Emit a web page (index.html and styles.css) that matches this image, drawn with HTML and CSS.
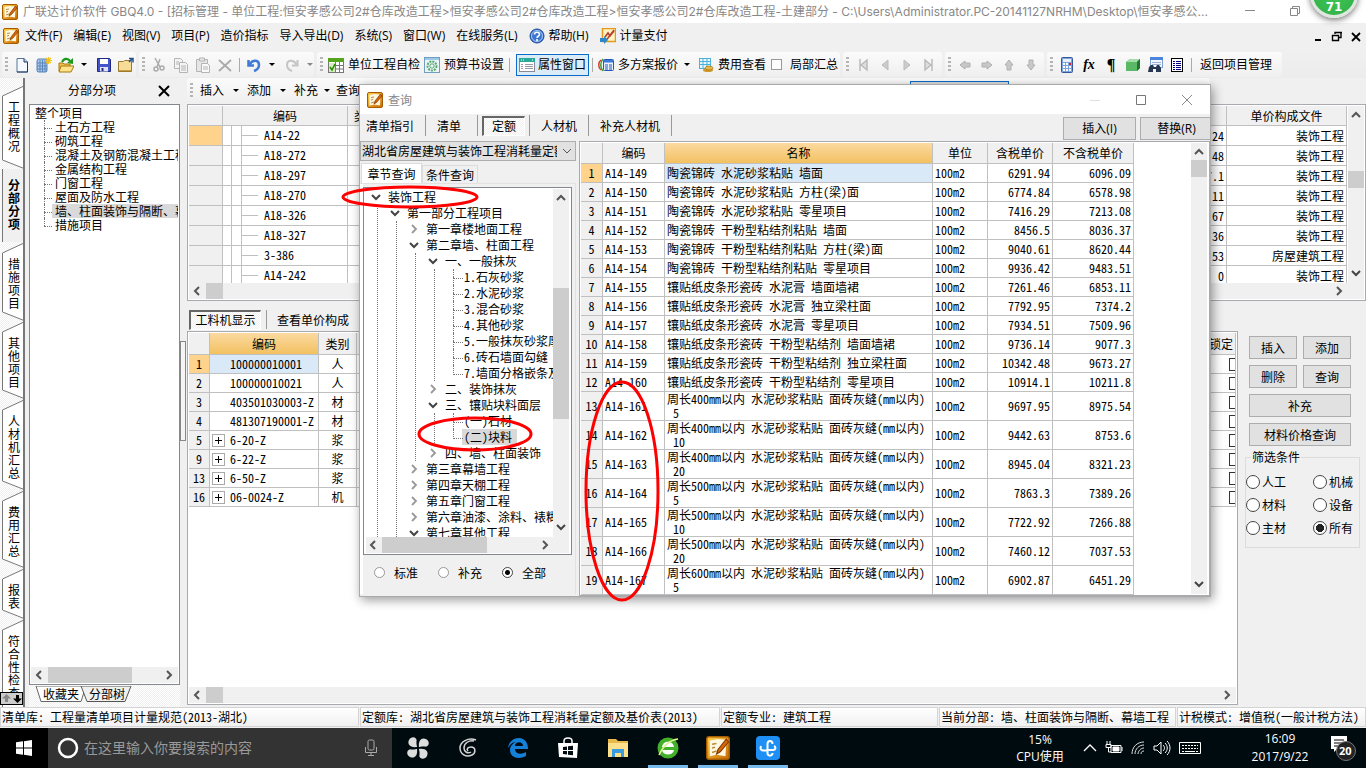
FILE: index.html
```html
<!DOCTYPE html>
<html lang="zh-CN">
<head>
<meta charset="utf-8">
<title>广联达计价软件 GBQ4.0</title>
<link rel="stylesheet" href="styles.css">
</head>
<body>
<svg class="defs" aria-hidden="true">
  <linearGradient id="gold" x1="0" y1="0" x2="1" y2="1"><stop offset="0" stop-color="#ffd24a"/><stop offset="1" stop-color="#c86a00"/></linearGradient>
  <symbol id="i-app" viewBox="0 0 16 16"><rect x=".5" y=".5" width="15" height="15" rx="1.5" fill="url(#gold)" stroke="#a85c00"/><path d="M2.5 3l5-1 6 .5-.5 11-6-1-4.500 1z" fill="#fff8e0"/><path d="M4 5.500l3-.5M4 8l2-.5M4 11l3-1" stroke="#b98a3a"/><path d="M13.500 2L8 9l-1 3 2.500-1.500L15 4z" fill="#d8660a" stroke="#7c3500" stroke-width=".7"/></symbol>
  <symbol id="i-new" viewBox="0 0 16 16"><path d="M3 1.500h7l3.500 3.500v10H3z" fill="#f4f9ff" stroke="#5b7596"/><path d="M10 1.500V5h3.500" fill="#bcd" stroke="#1d3a66"/><path d="M13.500 5v10H3" fill="none" stroke="#1d3a66"/></symbol>
  <symbol id="i-newbld" viewBox="0 0 16 16"><path d="M1 4l1-2h9v12l-1 1H2l-1-1z" fill="#a9c6e8" stroke="#5a83b5"/><path d="M4 3v12M6.500 3v12M9 3v12M1 6h10M1 9h10M1 12h10" stroke="#4f7cb4" stroke-width=".8"/><path d="M12.500 0v7M9 3.500h7M10 1l5 5M15 1l-5 5" stroke="#f2c21a" stroke-width="1.200"/></symbol>
  <symbol id="i-open" viewBox="0 0 16 16"><path d="M1 14V6h4l1 1h6v7z" fill="#f0c14b" stroke="#a8780f"/><path d="M3 9h13l-3 6H1z" fill="#ffe38a" stroke="#a8780f"/><path d="M4 5c2-4 6-4 8-1" fill="none" stroke="#1c9a1c" stroke-width="2.200"/><path d="M9 6l6 1V1z" fill="#1c9a1c"/></symbol>
  <symbol id="i-save" viewBox="0 0 16 16"><path d="M1.500 1.500h12l1 1v12h-13z" fill="#4454c8" stroke="#1e2a85"/><path d="M4 2h8v5H4z" fill="#fff"/><path d="M4 10h8v4.500H4z" fill="#dfe3fa"/><path d="M5.500 11h2v3h-2z" fill="#1e2a85"/></symbol>
  <symbol id="i-fold" viewBox="0 0 16 16"><path d="M.5 4.500h5l1-1h7v11H.5z" fill="#f6dc97" stroke="#9b7a32"/><path d="M1 13h12v1H1z" fill="#c99d3c"/><path d="M11 1.500h4v4M11 5l3-3" fill="none" stroke="#24508e" stroke-width="1.500"/></symbol>
  <symbol id="i-cut" viewBox="0 0 16 16"><g fill="none" stroke="#aaa" stroke-width="1.500"><path d="M4 1l5 9M9 2L6 10"/><circle cx="5" cy="12" r="2"/><circle cx="11" cy="11" r="2"/></g></symbol>
  <symbol id="i-copy" viewBox="0 0 16 16"><g fill="#f4f4f4" stroke="#b4b4b4"><path d="M1.500 1.500h6l2 2v8h-8z"/><path d="M6.500 5.500h6l2 2v8h-8z"/><path d="M8 9h5M8 11h5M8 13h5M3 5h3M3 7h3"/></g></symbol>
  <symbol id="i-paste" viewBox="0 0 16 16"><g fill="#e6e6e6" stroke="#b4b4b4"><path d="M1.500 2.500h11v12h-11z"/><path d="M4.500 1h5v3h-5z"/><path d="M6.500 6.500h6l2 2v7h-8z" fill="#fafafa"/><path d="M8 10h5M8 12h5"/></g></symbol>
  <symbol id="i-x" viewBox="0 0 16 16"><path d="M2 3l12 11M14 3L2 14" stroke="#aaa" stroke-width="1.800"/></symbol>
  <symbol id="i-undo" viewBox="0 0 16 16"><path d="M2.500 3v5.500H8" fill="none" stroke="#3f7ad6" stroke-width="2.500"/><path d="M3.500 7.500C7 2 13 3 13 8c0 3-2 5-5 6" fill="none" stroke="#3f7ad6" stroke-width="2.500"/></symbol>
  <symbol id="i-redo" viewBox="0 0 16 16"><path d="M13.500 3v5.500H8" fill="none" stroke="#c4c4c4" stroke-width="2"/><path d="M12.500 7.500C9 2 3 3 3 8c0 3 2 5 5 6" fill="none" stroke="#c4c4c4" stroke-width="2"/></symbol>
  <symbol id="i-check" viewBox="0 0 16 16"><rect x=".5" y="1.500" width="15" height="14" fill="#fff" stroke="#777"/><path d="M0 1h16v4H0z" fill="#55a51c"/><path d="M1 8.500h14M1 12h14M7.500 5v10M11.500 5v10" stroke="#777"/><path d="M1 6h6v9H1z" fill="#d6ecc2"/><path d="M2 10l2 3 3-6" fill="none" stroke="#2c8a00" stroke-width="1.600"/></symbol>
  <symbol id="i-gear" viewBox="0 0 16 16"><rect x=".5" y=".5" width="15" height="15" fill="#eaf5fb" stroke="#6f9fc0"/><path d="M1 1h14v2H1z" fill="#9cc9e6"/><circle cx="8" cy="9" r="4.500" fill="none" stroke="#5aa76b" stroke-width="2" stroke-dasharray="2 1"/><circle cx="8" cy="9" r="2.200" fill="none" stroke="#5aa76b"/></symbol>
  <symbol id="i-win" viewBox="0 0 16 16"><rect x=".5" y="1.500" width="15" height="13" fill="#fff" stroke="#889"/><path d="M0 1h16v4H0z" fill="#28a99a"/><path d="M2 3h1M4 3h1M13 3h1" stroke="#fff"/><path d="M2 7.500h2M6 7.500h8M2 9.500h2M6 9.500h8M2 11.500h2M6 11.500h8" stroke="#99a"/></symbol>
  <symbol id="i-multi" viewBox="0 0 16 16"><path d="M3 3C0 5 0 11 3 13" fill="none" stroke="#e0332a" stroke-width="1.500"/><path d="M5 2C2 5 2 11 5 14" fill="none" stroke="#2fa33a" stroke-width="1.500"/><rect x="5.500" y="2.500" width="10" height="11" rx="1" fill="#eaf2ff" stroke="#2358b8"/><path d="M6 3h9v2.500H6z" fill="#3d78dd"/><path d="M7 8h3M11 8h3M7 10h3M11 10h3M7 12h3M11 12h3" stroke="#2358b8"/></symbol>
  <symbol id="i-fee" viewBox="0 0 16 16"><rect x="1.500" y="1.500" width="11" height="10" fill="#e9f8ff" stroke="#4db2d8"/><path d="M1 4.500h12M1 7.500h12M5 1v11M9 1v11" stroke="#4db2d8"/><ellipse cx="10" cy="13" rx="5" ry="2" fill="#d09a2a"/><ellipse cx="11" cy="11" rx="4" ry="2" fill="#e8b64a" stroke="#9c6c0c" stroke-width=".6"/></symbol>
  <symbol id="i-first" viewBox="0 0 16 16"><path d="M5 2v12M12 3L6 8l6 5z" fill="#ddd" stroke="#bbb" stroke-width="1.500"/></symbol>
  <symbol id="i-prev" viewBox="0 0 16 16"><path d="M11 3v10L5 8z" fill="#ccc" stroke="#bbb"/></symbol>
  <symbol id="i-next" viewBox="0 0 16 16"><path d="M5 3v10l6-5z" fill="#ccc" stroke="#bbb"/></symbol>
  <symbol id="i-last" viewBox="0 0 16 16"><path d="M11 2v12M4 3l6 5-6 5z" fill="#ddd" stroke="#bbb" stroke-width="1.500"/></symbol>
  <symbol id="i-al" viewBox="0 0 16 16"><path d="M3 8l5-4v2h5v4H8v2z" fill="#c8c8c8" stroke="#b0b0b0"/></symbol>
  <symbol id="i-calc" viewBox="0 0 16 16"><rect x="2.500" y=".5" width="11" height="15" rx="1" fill="#7ea4df" stroke="#35589c"/><path d="M4 2h8v3H4z" fill="#e8f0fa"/><path d="M4 7h8M4 10h8M4 13h8" stroke="#fff" stroke-width="1.800" stroke-dasharray="2 1"/><path d="M10 7h2" stroke="#d22" stroke-width="1.800"/></symbol>
  <symbol id="i-cube" viewBox="0 0 16 16"><path d="M1 5l4-3h10v9l-3 3H1z" fill="#3c9a4a"/><path d="M1 5l4-3h10l-3 3z" fill="#a5dcaa"/><path d="M1 5h11v9H1z" fill="#5ab866"/><path d="M12 5l3-3v9l-3 3z" fill="#217431"/></symbol>
  <symbol id="i-find" viewBox="0 0 16 16"><rect x="3.500" y=".5" width="12" height="10" fill="#f2f7ff" stroke="#7f9fd0"/><path d="M3 0h13v3H3z" fill="#4a84dc"/><path d="M5 5.500h9M5 7.500h9" stroke="#9bb3d6"/><path d="M2 10l2-2h2l1 2h2l1-2h2l2 3v4H9v-3H6v3H1z" fill="#26364e"/></symbol>
  <symbol id="i-list" viewBox="0 0 16 16"><rect x="2.500" y="1.500" width="11" height="13" fill="#fff" stroke="#000"/><path d="M4 4.500h2M7 4.500h5M4 6.500h2M7 6.500h5M4 8.500h2M7 8.500h5M4 10.500h2M7 10.500h5M4 12.500h2M7 12.500h5" stroke="#000080"/></symbol>
  <symbol id="i-help" viewBox="0 0 16 16"><circle cx="8" cy="8" r="7" fill="#3b76d2" stroke="#1c4a99"/><circle cx="8" cy="8" r="5.500" fill="none" stroke="#a9c9f5"/><path d="M5.500 6.500c0-3 5-3 5 0 0 2-2.500 1.500-2.500 3.500M8 11v2" fill="none" stroke="#fff" stroke-width="1.600"/></symbol>
  <symbol id="i-pay" viewBox="0 0 16 16"><rect x="2.500" y=".5" width="13" height="13" fill="#fff3c4" stroke="#e29a1c" stroke-width="1.500"/><path d="M5 9l3-4 2 3 4-5M14 2L8 10l-2 2" fill="none" stroke="#b8402c" stroke-width="1.600"/><path d="M0 10h4V8l4 4-4 4v-2H0z" fill="#2d87c9"/></symbol>
  <symbol id="c-l" viewBox="0 0 10 10"><path d="M7 1L3 5l4 4" fill="none" stroke="#555" stroke-width="2"/></symbol>
  <symbol id="c-r" viewBox="0 0 10 10"><path d="M3 1l4 4-4 4" fill="none" stroke="#555" stroke-width="2"/></symbol>
  <symbol id="c-u" viewBox="0 0 10 10"><path d="M1 7l4-4 4 4" fill="none" stroke="#555" stroke-width="2"/></symbol>
  <symbol id="c-d" viewBox="0 0 10 10"><path d="M1 3l4 4 4-4" fill="none" stroke="#444" stroke-width="2"/></symbol>
  <symbol id="t-top" viewBox="0 0 22 11"><path d="M0 11L22 1v10z" fill="#fff"/><path d="M.5 11L22 1" fill="none" stroke="#777"/></symbol>
  <symbol id="t-bot" viewBox="0 0 22 9"><path d="M0 0h22v9z" fill="#fff"/><path d="M.5 0L22 8.500" fill="none" stroke="#777"/></symbol>
</svg>

<div class="app">
  <header class="titlebar">
    <svg class="ic"><use href="#i-app"/></svg>
    <h1>广联达计价软件 GBQ4.0 - [招标管理 - 单位工程:恒安孝感公司2#仓库改造工程&gt;恒安孝感公司2#仓库改造工程&gt;恒安孝感公司2#仓库改造工程-土建部分 - C:\Users\Administrator.PC-20141127NRHM\Desktop\恒安孝感公...</h1>
    <div class="winctl">
      <svg width="12" height="12"><path d="M1 5.500h10" stroke="#888"/></svg>
      <svg width="12" height="12"><path d="M1.500 3.500h7v7h-7zM3.500 3V1.500h7v7H9" fill="none" stroke="#888"/></svg>
    </div>
    <span class="score">71</span>
  </header>

  <nav class="menubar">
    <svg class="ic"><use href="#i-app"/></svg>
    <button>文件(F)</button><button>编辑(E)</button><button>视图(V)</button><button>项目(P)</button><button>造价指标</button><button>导入导出(D)</button><button>系统(S)</button><button>窗口(W)</button><button>在线服务(L)</button>
    <button class="wi"><svg class="ic"><use href="#i-help"/></svg>帮助(H)</button>
    <button class="wi"><svg class="ic"><use href="#i-pay"/></svg>计量支付</button>
    <div class="mdi">
      <svg width="12" height="12"><path d="M3 10h6" stroke="#000" stroke-width="2"/></svg>
      <svg width="12" height="12"><path d="M1.500 5.500h6v5h-6zM4 4V2.500h6v5H8M1 5.500h7M4 2.500h7" fill="none" stroke="#000" stroke-width="1.400"/></svg>
      <svg width="12" height="12"><path d="M2 3l8 8M10 3l-8 8" stroke="#000" stroke-width="1.800"/></svg>
    </div>
  </nav>

  <div class="toolbar">
    <div class="grp g1"><i class="grip"></i>
      <button aria-label="新建"><svg class="ic"><use href="#i-new"/></svg></button><button aria-label="新建项目"><svg class="ic"><use href="#i-newbld"/></svg></button><button aria-label="打开"><svg class="ic"><use href="#i-open"/></svg></button><i class="dd"></i><button aria-label="保存"><svg class="ic"><use href="#i-save"/></svg></button><button aria-label="目录"><svg class="ic"><use href="#i-fold"/></svg></button></div>
    <div class="grp g2"><i class="grip"></i>
      <button aria-label="剪切"><svg class="ic"><use href="#i-cut"/></svg></button><button aria-label="复制"><svg class="ic"><use href="#i-copy"/></svg></button><button aria-label="粘贴"><svg class="ic"><use href="#i-paste"/></svg></button><button aria-label="删除"><svg class="ic"><use href="#i-x"/></svg></button><i class="sep"></i><button aria-label="撤销"><svg class="ic"><use href="#i-undo"/></svg></button><i class="dd"></i><button aria-label="恢复"><svg class="ic"><use href="#i-redo"/></svg></button><i class="dd off"></i></div>
    <div class="grp g3"><i class="grip"></i>
      <button class="lb"><svg class="ic"><use href="#i-check"/></svg>单位工程自检</button><button class="lb"><svg class="ic"><use href="#i-gear"/></svg>预算书设置</button><i class="sep"></i><button class="lb on"><svg class="ic"><use href="#i-win"/></svg>属性窗口</button><i class="sep"></i><button class="lb"><svg class="ic"><use href="#i-multi"/></svg>多方案报价</button><i class="dd"></i><button class="lb"><svg class="ic"><use href="#i-fee"/></svg>费用查看</button><label class="part"><input type="checkbox">局部汇总</label></div>
    <div class="grp g4"><i class="grip"></i>
      <button aria-label="首条"><svg class="ic"><use href="#i-first"/></svg></button><button aria-label="上一条"><svg class="ic"><use href="#i-prev"/></svg></button><button aria-label="下一条"><svg class="ic"><use href="#i-next"/></svg></button><button aria-label="末条"><svg class="ic"><use href="#i-last"/></svg></button></div>
    <div class="grp g5"><i class="grip"></i>
      <button aria-label="左移"><svg class="ic"><use href="#i-al"/></svg></button><button aria-label="右移"><svg class="ic r180"><use href="#i-al"/></svg></button><button aria-label="上移"><svg class="ic r90"><use href="#i-al"/></svg></button><button aria-label="下移"><svg class="ic r270"><use href="#i-al"/></svg></button></div>
    <div class="grp g6"><i class="grip"></i>
      <button aria-label="计算器"><svg class="ic"><use href="#i-calc"/></svg></button><button class="fx">fx</button><button class="para">¶</button><button aria-label="图元"><svg class="ic"><use href="#i-cube"/></svg></button><button aria-label="查找"><svg class="ic"><use href="#i-find"/></svg></button><button aria-label="清单"><svg class="ic"><use href="#i-list"/></svg></button><i class="sep"></i><button class="lb back">返回项目管理</button></div>
  </div>

  <main class="work">
    <nav class="vtabs">
      <button class="v1"><svg><use href="#t-top"/></svg><span>工程概况</span><svg class="b"><use href="#t-bot"/></svg></button>
      <button class="v2 cur"><span>分部分项</span></button>
      <button class="v3"><svg><use href="#t-top"/></svg><span>措施项目</span><svg class="b"><use href="#t-bot"/></svg></button>
      <button class="v4"><svg><use href="#t-top"/></svg><span>其他项目</span><svg class="b"><use href="#t-bot"/></svg></button>
      <button class="v5"><svg><use href="#t-top"/></svg><span>人材机汇总</span><svg class="b"><use href="#t-bot"/></svg></button>
      <button class="v6"><svg><use href="#t-top"/></svg><span>费用汇总</span><svg class="b"><use href="#t-bot"/></svg></button>
      <button class="v7"><svg><use href="#t-top"/></svg><span>报表</span><svg class="b"><use href="#t-bot"/></svg></button>
      <button class="v8"><svg><use href="#t-top"/></svg><span>符合性检查</span></button>
      <div class="vscr"><svg width="11" height="11"><path d="M5.500 1L1 5.500h3V9h3V5.500h3z" fill="#888"/></svg><svg width="11" height="11"><path d="M5.500 10L1 5.500h3V2h3v3.500h3z" fill="#000"/></svg></div>
    </nav>

    <aside class="side">
      <div class="side-h"><span>分部分项</span><svg width="14" height="14"><path d="M2 2l10 10M12 2L2 12" stroke="#000" stroke-width="2"/></svg></div>
      <div class="tree1">
        <ul>
          <li class="root">整个项目</li><li>土石方工程</li><li>砌筑工程</li><li>混凝土及钢筋混凝土工程</li><li>金属结构工程</li><li>门窗工程</li><li>屋面及防水工程</li><li class="sel">墙、柱面装饰与隔断、幕墙</li><li class="last">措施项目</li>
        </ul>
        <div class="hs"><svg><use href="#c-l"/></svg><i class="th w84"></i><svg class="end"><use href="#c-r"/></svg></div>
      </div>
      <div class="btabs">
        <svg width="110" height="16"><path d="M7 0l5 15.500h40L57 0z" fill="#fff" stroke="#666"/><path d="M52 0l6 15.500h38L102 0z" fill="#f0f0f0" stroke="#555"/></svg>
        <button>收藏夹</button><button>分部树</button>
      </div>
    </aside>
    <div class="split"><i></i></div>

    <section class="center">
      <div class="bar2"><div class="grp"><i class="grip"></i><button>插入</button><i class="dd"></i><button>添加</button><i class="dd"></i><button>补充</button><i class="dd tight"></i><button>查询</button><i class="field"></i></div></div>
      <div class="box top">
        <div class="clip">
          <table class="grid t1">
            <colgroup><col class="c34"><col class="c125"><col><col class="c119"></colgroup>
            <tr><th></th><th>编码</th><th class="l">类别</th><th>单价构成文件</th></tr>
            <tr><td class="n hot"></td><td class="br"><b></b>A14-22</td><td class="r">24</td><td class="r">装饰工程</td></tr>
            <tr><td class="n"></td><td class="br"><b></b>A18-272</td><td class="r">48</td><td class="r">装饰工程</td></tr>
            <tr><td class="n"></td><td class="br"><b></b>A18-297</td><td class="r">7.1</td><td class="r">装饰工程</td></tr>
            <tr><td class="n"></td><td class="br"><b></b>A18-270</td><td class="r">11</td><td class="r">装饰工程</td></tr>
            <tr><td class="n"></td><td class="br"><b></b>A18-326</td><td class="r">67</td><td class="r">装饰工程</td></tr>
            <tr><td class="n"></td><td class="br"><b></b>A18-327</td><td class="r">36</td><td class="r">装饰工程</td></tr>
            <tr><td class="n"></td><td class="br"><b></b>3-386</td><td class="r">53</td><td class="r">房屋建筑工程</td></tr>
            <tr><td class="n"></td><td class="br"><b></b>A14-242</td><td class="r">0</td><td class="r">装饰工程</td></tr>
          </table>
          <div class="vs"><svg><use href="#c-u"/></svg><i class="th a"></i><svg class="end"><use href="#c-d"/></svg></div>
        </div>
        <div class="hs wide"><svg><use href="#c-l"/></svg><i class="th w17"></i><svg class="end"><use href="#c-r"/></svg></div>
      </div>
      <div class="lower">
        <div class="lowl">
          <div class="tabs2"><button class="press">工料机显示</button><i class="bar"></i><button>查看单价构成</button></div>
          <div class="box bot">
            <table class="grid t2">
              <colgroup><col class="c21"><col class="c109"><col class="c38"><col><col class="c28"></colgroup>
              <tr><th></th><th class="gold">编码</th><th>类别</th><th></th><th class="l lock">锁定</th></tr>
              <tr><td class="n hot">1</td><td class="k hit">100000010001</td><td class="c">人</td><td></td><td><input type="checkbox" aria-label="锁定 1"></td></tr>
              <tr><td class="n">2</td><td class="k">100000010021</td><td class="c">人</td><td></td><td><input type="checkbox" aria-label="锁定 2"></td></tr>
              <tr><td class="n">3</td><td class="k">403501030003-Z</td><td class="c">材</td><td></td><td><input type="checkbox" aria-label="锁定 3"></td></tr>
              <tr><td class="n">4</td><td class="k">481307190001-Z</td><td class="c">材</td><td></td><td><input type="checkbox" aria-label="锁定 4"></td></tr>
              <tr><td class="n">5</td><td class="k"><button class="plus" aria-label="展开"></button>6-20-Z</td><td class="c">浆</td><td></td><td><input type="checkbox" aria-label="锁定 5"></td></tr>
              <tr><td class="n">9</td><td class="k"><button class="plus" aria-label="展开"></button>6-22-Z</td><td class="c">浆</td><td></td><td><input type="checkbox" aria-label="锁定 9"></td></tr>
              <tr><td class="n">13</td><td class="k"><button class="plus" aria-label="展开"></button>6-50-Z</td><td class="c">浆</td><td></td><td><input type="checkbox" aria-label="锁定 13"></td></tr>
              <tr><td class="n">16</td><td class="k"><button class="plus" aria-label="展开"></button>06-0024-Z</td><td class="c">机</td><td></td><td><input type="checkbox" aria-label="锁定 16"></td></tr>
            </table>
            <div class="hs"><svg><use href="#c-l"/></svg><i class="th w17"></i><svg class="end"><use href="#c-r"/></svg></div>
          </div>
        </div>
        <aside class="acts">
          <div class="pair"><button class="btn">插入</button><button class="btn">添加</button><button class="btn">删除</button><button class="btn">查询</button><button class="btn full">补充</button><button class="btn full">材料价格查询</button></div>
          <fieldset><legend>筛选条件</legend>
            <label><input type="radio" name="f">人工</label><label><input type="radio" name="f">机械</label>
            <label><input type="radio" name="f">材料</label><label><input type="radio" name="f">设备</label>
            <label><input type="radio" name="f">主材</label><label><input type="radio" name="f" checked>所有</label>
          </fieldset>
        </aside>
      </div>
    </section>
  </main>

  <footer class="status"><span>清单库: 工程量清单项目计量规范(2013-湖北)</span><span>定额库: 湖北省房屋建筑与装饰工程消耗量定额及基价表(2013)</span><span>定额专业: 建筑工程</span><span>当前分部: 墙、柱面装饰与隔断、幕墙工程</span><span>计税模式: 增值税(一般计税方法)</span></footer>

  <div class="taskbar">
    <button class="start" aria-label="开始"><svg width="16" height="16"><path d="M0 2.300L7 1.300V7.500H0zM8 1.200L16 0v7.500H8zM0 8.500h7v6.200L0 13.700zM8 8.500h8V16L8 14.800z" fill="#fff"/></svg></button>
    <div class="search"><svg width="22" height="22"><circle cx="11" cy="11" r="9" fill="none" stroke="#fff" stroke-width="2.500"/></svg><input type="text" placeholder="在这里输入你要搜索的内容" aria-label="搜索"><svg width="14" height="18"><rect x="4" y="1" width="6" height="10" rx="1.500" fill="none" stroke="#aaa"/><path d="M1.500 8v5.500h11V8M7 14v3M4 16.500h6" fill="none" stroke="#aaa"/></svg></div>
    <div class="apps">
      <button aria-label="风扇"><svg width="24" height="24" fill="#ddd"><path d="M11 11C4 12 1 8 3 4s8-4 8 2zM13 11c-1-7 3-10 7-8s4 8-2 8zM13 13c7-1 10 3 8 7s-8 4-8-2zM11 13c1 7-3 10-7 8s-4-8 2-8z"/><path d="M3 12c3 2 6 1 9 0 3-1 6-2 9 0M12 3c-2 3-1 6 0 9 1 3 2 6 0 9" fill="none" stroke="#000b10"/></svg></button>
      <button aria-label="浏览"><svg width="24" height="24" fill="none" stroke="#d4d4d4" stroke-width="1.500"><path d="M20 4C12 1 4 6 4 12s6 10 12 7c4-2 4-8-1-8-3 0-5 2-3 4"/><path d="M18 5c-5-1-10 2-10 7 0 4 4 6 7 4"/></svg></button>
      <button aria-label="Edge"><svg width="24" height="24"><path d="M2 12C3 5 8 2 13 2c6 0 9 5 9 11H9c0 5 6 6 11 3v4c-7 4-16 2-16-6 0-4 3-7 6-8-4 0-6 3-8 6zm7-2h8c0-5-8-5-8 0z" fill="#1580d8"/></svg></button>
      <button aria-label="应用商店"><svg width="24" height="24"><path d="M2 7h20l-1 15-18-1z" fill="#fff"/><path d="M8 9V5c0-4 8-4 8 0v4" fill="none" stroke="#fff" stroke-width="1.500"/><path d="M7 11l4-.5V14H7zM12 10.300l5-.6V14h-5zM7 15h4v3.500L7 18zM12 15h5v4.300l-5-.6z" fill="#000b10"/></svg></button>
      <button aria-label="文件管理器"><svg width="24" height="24"><path d="M2 3h8l2 2h10v16H2z" fill="#e9b94a"/><path d="M2 7h20v14H2z" fill="#ffe08a"/><path d="M6 21v-8h12v8h-3v-4H9v4z" fill="#3a9be0"/></svg></button>
      <button class="run" aria-label="浏览器"><svg width="24" height="24"><circle cx="12" cy="12" r="10.500" fill="#43b02a"/><path d="M6 11c1-7 11-7 12 0zM6 14h12c-1 6-11 6-12 0z" fill="#fff"/><path d="M3 19C8 8 14 4 22 3" fill="none" stroke="#d9f58c" stroke-width="1.500"/></svg></button>
      <button class="run" aria-label="GBQ"><svg width="24" height="24"><use href="#i-app"/></svg></button>
      <button class="run" aria-label="云"><svg width="24" height="24"><rect width="24" height="24" rx="4" fill="#1e90f5"/><path d="M11.500 14V8c0-4 5-4 5 0M5 10c-2 5 3 5 6.500 4H17c3 0 3-3 1-4M11.500 14v3c0 4 5 3 5 0" fill="none" stroke="#fff" stroke-width="2"/></svg></button>
    </div>
    <div class="cpu">15%<br>CPU使用</div>
    <div class="tray">
      <svg width="16" height="16"><path d="M2 11l6-6 6 6" fill="none" stroke="#fff" stroke-width="1.300"/></svg>
      <svg width="18" height="16" fill="none" stroke="#fff"><path d="M6 5.500h10v7H6zM17 7v4M2 1v3M5 1v3M1 4.500h5v3H1zM3.500 8v4H6"/><path d="M8 7h6v4H8z" fill="#fff"/></svg>
      <svg width="16" height="16" fill="none" stroke="#ddd"><path d="M2 14C2 7 7 2 14 2M5 14c0-5 4-9 9-9M8 14c0-3 3-6 6-6M11 14c0-2 1-3 3-3"/></svg>
      <svg width="18" height="16" fill="none" stroke="#fff"><path d="M1 6h3l4-4v12l-4-4H1zM10 5c2 2 2 4 0 6M12 3c3 3 3 7 0 10M14 1c4 4 4 10 0 14"/></svg>
      <svg width="24" height="16" fill="none" stroke="#fff"><path d="M1.500 2.500h21v11h-21z"/><path d="M4 5.500h16M4 8.500h16" stroke-dasharray="2 1"/><path d="M4 11.500h2M7 11.500h10M18 11.500h2"/></svg>
    </div>
    <div class="clock">16:09<br>2017/9/22</div>
    <div class="note"><svg width="28" height="26"><path d="M1 1h16v13H7l-3 3v-3H1z" fill="#fff"/><path d="M4 5h10M4 8h10M4 11h6" stroke="#000"/><circle cx="16" cy="16" r="9.500" fill="#222" stroke="#777"/></svg><span>20</span></div>
  </div>
</div>

<section class="dialog" role="dialog" aria-label="查询">
  <header><svg class="ic"><use href="#i-app"/></svg><h2>查询</h2>
    <svg width="12" height="12"><path d="M1 6.500h10" stroke="#e0e0e0"/></svg><svg width="12" height="12"><path d="M1.500 1.500h9v9h-9z" fill="none" stroke="#777"/></svg><svg width="12" height="12"><path d="M1 1l10 10M11 1L1 11" stroke="#888"/></svg></header>
  <div class="dtabs"><button>清单指引</button><button class="w">清单</button><button class="p"><span class="press">定额</span></button><button>人材机</button><button>补充人材机</button>
    <div class="dact"><button class="btn">插入<u>(I)</u></button><button class="btn">替换<u>(R)</u></button></div></div>
  <div class="dbody">
    <div class="dleft">
      <select aria-label="定额库"><option>湖北省房屋建筑与装饰工程消耗量定额</option></select>
      <div class="qt"><button class="cur">章节查询</button><button>条件查询</button></div>
      <div class="page">
        <div class="tbox">
          <div class="tv">
            <div class="tree2">
              <ul>
                <li><p class="o">装饰工程</p><ul>
                  <li><p class="o">第一部分工程项目</p><ul>
                    <li><p class="s">第一章楼地面工程</p></li>
                    <li><p class="o">第二章墙、柱面工程</p><ul>
                      <li><p class="o">一、一般抹灰</p><ul>
                        <li class="leaf">1.石灰砂浆</li><li class="leaf">2.水泥砂浆</li><li class="leaf">3.混合砂浆</li><li class="leaf">4.其他砂浆</li><li class="leaf">5.一般抹灰砂浆厚度</li><li class="leaf">6.砖石墙面勾缝</li><li class="leaf end">7.墙面分格嵌条及</li></ul></li>
                      <li><p class="s">二、装饰抹灰</p></li>
                      <li><p class="o">三、镶贴块料面层</p><ul>
                        <li class="leaf">(一)石材</li><li class="leaf end"><span class="pick">(二)块料</span></li></ul></li>
                      <li><p class="s">四、墙、柱面装饰</p></li></ul></li>
                    <li><p class="s">第三章幕墙工程</p></li>
                    <li><p class="s">第四章天棚工程</p></li>
                    <li><p class="s">第五章门窗工程</p></li>
                    <li><p class="s">第六章油漆、涂料、裱糊</p></li>
                    <li><p class="o">第七章其他工程</p></li></ul></li></ul></li>
              </ul>
            </div>
            <div class="vs"><svg><use href="#c-u"/></svg><i class="th b"></i><svg class="end"><use href="#c-d"/></svg></div>
          </div>
          <div class="hs"><svg><use href="#c-l"/></svg><i class="th w105"></i><svg class="end"><use href="#c-r"/></svg></div>
        </div>
        <div class="radios"><label><input type="radio" name="k">标准</label><label><input type="radio" name="k">补充</label><label><input type="radio" name="k" checked>全部</label></div>
      </div>
    </div>
    <div class="dright">
      <table class="grid t3">
        <colgroup><col class="c22"><col class="c62"><col class="c268"><col class="c55"><col class="c65"><col class="c81"></colgroup>
        <tr><th></th><th>编码</th><th class="gold">名称</th><th>单位</th><th>含税单价</th><th>不含税单价</th></tr>
        <tr><td class="n hot">1</td><td>A14-149</td><td class="hit">陶瓷锦砖 水泥砂浆粘贴 墙面</td><td>100m2</td><td class="r">6291.94</td><td class="r">6096.09</td></tr>
        <tr><td class="n">2</td><td>A14-150</td><td>陶瓷锦砖 水泥砂浆粘贴 方柱(梁)面</td><td>100m2</td><td class="r">6774.84</td><td class="r">6578.98</td></tr>
        <tr><td class="n">3</td><td>A14-151</td><td>陶瓷锦砖 水泥砂浆粘贴 零星项目</td><td>100m2</td><td class="r">7416.29</td><td class="r">7213.08</td></tr>
        <tr><td class="n">4</td><td>A14-152</td><td>陶瓷锦砖 干粉型粘结剂粘贴 墙面</td><td>100m2</td><td class="r">8456.5</td><td class="r">8036.37</td></tr>
        <tr><td class="n">5</td><td>A14-153</td><td>陶瓷锦砖 干粉型粘结剂粘贴 方柱(梁)面</td><td>100m2</td><td class="r">9040.61</td><td class="r">8620.44</td></tr>
        <tr><td class="n">6</td><td>A14-154</td><td>陶瓷锦砖 干粉型粘结剂粘贴 零星项目</td><td>100m2</td><td class="r">9936.42</td><td class="r">9483.51</td></tr>
        <tr><td class="n">7</td><td>A14-155</td><td>镶贴纸皮条形瓷砖 水泥膏 墙面墙裙</td><td>100m2</td><td class="r">7261.46</td><td class="r">6853.11</td></tr>
        <tr><td class="n">8</td><td>A14-156</td><td>镶贴纸皮条形瓷砖 水泥膏 独立梁柱面</td><td>100m2</td><td class="r">7792.95</td><td class="r">7374.2</td></tr>
        <tr><td class="n">9</td><td>A14-157</td><td>镶贴纸皮条形瓷砖 水泥膏 零星项目</td><td>100m2</td><td class="r">7934.51</td><td class="r">7509.96</td></tr>
        <tr><td class="n">10</td><td>A14-158</td><td>镶贴纸皮条形瓷砖 干粉型粘结剂 墙面墙裙</td><td>100m2</td><td class="r">9736.14</td><td class="r">9077.3</td></tr>
        <tr><td class="n">11</td><td>A14-159</td><td>镶贴纸皮条形瓷砖 干粉型粘结剂 独立梁柱面</td><td>100m2</td><td class="r">10342.48</td><td class="r">9673.27</td></tr>
        <tr><td class="n">12</td><td>A14-160</td><td>镶贴纸皮条形瓷砖 干粉型粘结剂 零星项目</td><td>100m2</td><td class="r">10914.1</td><td class="r">10211.8</td></tr>
        <tr class="two"><td class="n">13</td><td>A14-161</td><td>周长400mm以内 水泥砂浆粘贴 面砖灰缝(mm以内)<br>&nbsp;5</td><td>100m2</td><td class="r">9697.95</td><td class="r">8975.54</td></tr>
        <tr class="two"><td class="n">14</td><td>A14-162</td><td>周长400mm以内 水泥砂浆粘贴 面砖灰缝(mm以内)<br>&nbsp;10</td><td>100m2</td><td class="r">9442.63</td><td class="r">8753.6</td></tr>
        <tr class="two"><td class="n">15</td><td>A14-163</td><td>周长400mm以内 水泥砂浆粘贴 面砖灰缝(mm以内)<br>&nbsp;20</td><td>100m2</td><td class="r">8945.04</td><td class="r">8321.23</td></tr>
        <tr class="two"><td class="n">16</td><td>A14-164</td><td>周长500mm以内 水泥砂浆粘贴 面砖灰缝(mm以内)<br>&nbsp;5</td><td>100m2</td><td class="r">7863.3</td><td class="r">7389.26</td></tr>
        <tr class="two"><td class="n">17</td><td>A14-165</td><td>周长500mm以内 水泥砂浆粘贴 面砖灰缝(mm以内)<br>&nbsp;10</td><td>100m2</td><td class="r">7722.92</td><td class="r">7266.88</td></tr>
        <tr class="two"><td class="n">18</td><td>A14-166</td><td>周长500mm以内 水泥砂浆粘贴 面砖灰缝(mm以内)<br>&nbsp;20</td><td>100m2</td><td class="r">7460.12</td><td class="r">7037.53</td></tr>
        <tr class="two"><td class="n">19</td><td>A14-167</td><td>周长600mm以内 水泥砂浆粘贴 面砖灰缝(mm以内)<br>&nbsp;5</td><td>100m2</td><td class="r">6902.87</td><td class="r">6451.29</td></tr>
      </table>
      <div class="vs"><svg><use href="#c-u"/></svg><i class="th c"></i><svg class="end"><use href="#c-d"/></svg></div>
    </div>
  </div>
</section>

<svg class="marks" width="700" height="610" fill="none" stroke="#f00" stroke-width="3" aria-hidden="true"><ellipse cx="410" cy="197" rx="67" ry="10"/><ellipse cx="475" cy="434" rx="56" ry="16"/><ellipse cx="622" cy="491" rx="36" ry="109"/></svg>
</body>
</html>
```
FILE: styles.css
```css
* { box-sizing: border-box; }
body {
  margin: 0;
  height: 100vh;
  overflow: hidden;
  position: relative;
  font: 12px/14px "Noto Sans Mono CJK SC", "Noto Sans CJK SC", sans-serif;
  color: #000;
  background: #f0f0f0;
}
button, input, select { font: inherit; color: inherit; }
button { border: 0; background: none; padding: 0; margin: 0; white-space: nowrap; }
input { margin: 0; }
ul { list-style: none; margin: 0; padding: 0; }
p, h1, h2 { margin: 0; font: inherit; }
svg { display: block; flex: none; }
.defs { position: absolute; width: 0; height: 0; }
.ic { width: 16px; height: 16px; }
.app { display: flex; flex-direction: column; height: 100vh; }
.menubar, .toolbar, .bar2, .taskbar, .side-h { font-family: "Open Sans", "Noto Sans CJK SC", sans-serif; }

/* title and menu */
.titlebar { display: flex; align-items: center; height: 23px; padding-left: 2px; background: #fff; color: #888; position: relative; font-family: Inter, "Noto Sans CJK SC", sans-serif; }
.titlebar h1 { margin-left: 5px; flex: 1; white-space: nowrap; }
.winctl { display: flex; gap: 33px; padding: 0 65px 2px 16px; }
.score {
  position: absolute; right: 8px; top: -30px; width: 48px; height: 48px; border-radius: 50%;
  border: 3px solid #dfe6df; background: radial-gradient(#3fc655, #2fae46); box-shadow: 0 2px 6px #777;
  color: #fff; font: bold 12px/68px "DejaVu Sans", sans-serif; text-align: center; z-index: 2;
}
.menubar { display: flex; align-items: center; height: 28px; padding: 0 4px 2px 3px; gap: 11px; }
.menubar > .ic { margin-right: -5px; }
.menubar .wi { display: flex; align-items: center; gap: 4px; }
.mdi { display: flex; gap: 7px; margin-left: auto; }

/* toolbars */
.toolbar { display: flex; align-items: center; gap: 3px; height: 27px; padding-left: 2px; background: linear-gradient(#f0f0f0, #ececec); }
.grp { display: flex; align-items: center; height: 25px; border-radius: 3px; background: linear-gradient(#fbfbfb, #efefef); }
.grp button { display: flex; align-items: center; justify-content: center; width: 22px; height: 22px; flex: none; }
.grp .lb { width: auto; padding: 0 2px; gap: 4px; }
.grp .on { border: 1px solid #0a6cc8; background: #dcebf8; gap: 3px; margin-left: 3px; }
.grp .back { padding: 0 5px; }
.g1 { width: 134px; } .g2 { width: 175px; } .g3 { width: 523px; } .g4 { width: 99px; } .g5 { width: 99px; } .g6 { width: 235px; }
.grip { width: 3px; height: 15px; margin: 0 3px; background: repeating-linear-gradient(#b5b5b5 0 2px, transparent 2px 4px); flex: none; }
.dd { width: 0; height: 0; border: 3px solid transparent; border-top-color: #000; border-bottom: 0; margin: 0 6px 0 4px; flex: none; }
.dd.off { border-top-color: #888; }
.sep { width: 1px; height: 14px; background: #aaa; margin: 0 3px; flex: none; }
.part { display: flex; align-items: center; gap: 8px; white-space: nowrap; padding-left: 3px; }
.part input { appearance: none; width: 11px; height: 11px; border: 1px solid #999; background: #fdfdfd; }
.r180 { transform: rotate(180deg); } .r90 { transform: rotate(90deg); } .r270 { transform: rotate(270deg); }
.grp .fx { font: italic bold 14px "Liberation Serif", serif; }
.grp .para { font: bold 16px "Liberation Serif", serif; }

/* work area */
.work { display: flex; flex: 1; min-height: 0; }
.vtabs {
  width: 25px; border-right: 2px solid #777; overflow: hidden; position: relative; display: flex; flex-direction: column;
  padding: 7px 0 0 2px; background: repeating-conic-gradient(#f0f0f0 0 25%, #fff 0 50%) 0 0/2px 2px;
}
.vtabs button { display: flex; flex-direction: column; width: 22px; white-space: normal; flex: none; }
.vtabs button svg { width: 22px; height: 11px; }
.vtabs button svg.b { height: 9px; }
.vtabs span { flex: 1; width: 22px; padding: 4px 4px 0 5px; line-height: 13px; border-left: 1px solid #777; background: #fff; word-break: break-all; }
.vtabs .cur span { font-weight: bold; background: #f0f0f0; padding-top: 9px; }
.v1 { height: 84px; } .v2 { height: 73px; } .v3 { height: 79px; } .v4 { height: 78px; } .v5 { height: 91px; } .v6 { height: 78px; } .v7 { height: 51px; } .v8 { height: 96px; }
.vscr { position: absolute; left: 0; bottom: 2px; display: flex; width: 23px; background: #ccc; border: 1px solid #000; }
.side { width: 155px; padding-left: 4px; display: flex; flex-direction: column; }
.side-h { height: 26px; display: flex; align-items: center; padding: 0 9px 0 39px; justify-content: space-between; }
.tree1 { flex: 1; border: 1px solid #828790; background: #fff; display: flex; flex-direction: column; padding: 1px; }
.tree1 ul { flex: 1; overflow: hidden; }
.tree1 li { height: 14px; margin-left: 13px; padding-left: 11px; white-space: nowrap; position: relative; }
.tree1 li.root { margin: 0; padding-left: 4px; }
.tree1 li:not(.root)::before { content: ""; position: absolute; left: 0; top: 0; width: 8px; height: 8px; border-bottom: 1px dotted #777; }
.tree1 li:not(.root)::after { content: ""; position: absolute; left: 0; top: 0; height: 14px; border-left: 1px dotted #777; }
.tree1 li.last::after { height: 8px; }
.tree1 .sel { background: linear-gradient(90deg, transparent 8px, #d9d9d9 8px); }
.btabs { height: 22px; position: relative; display: flex; gap: 10px; padding-left: 14px; align-items: flex-start; background: repeating-conic-gradient(#f0f0f0 0 25%, #fff 0 50%) 0 0/2px 2px; }
.btabs svg { position: absolute; left: 0; top: 1px; }
.btabs button { position: relative; height: 18px; }
.split { width: 7px; padding: 263px 1px 0 0; }
.split i { display: block; height: 100px; border: 1px solid #888; background: #f4f4f4; }
.center { flex: 1; min-width: 0; display: flex; flex-direction: column; }
.bar2 { height: 26px; padding-right: 156px; }
.bar2 .grp button { width: auto; padding: 0 4px; }
.bar2 .dd { margin: 0 4px 0 5px; }
.bar2 .dd.tight { margin: 0 2px; }
.field { width: 99px; height: 20px; margin-left: auto; margin-right: 201px; border: 1px solid #0a6cc8; background: #ddd; }
.box { border: 1px solid #a9a9b0; background: #fff; padding: 1px; display: flex; flex-direction: column; overflow: hidden; }
.top { height: 197px; }
.clip { flex: 1; min-height: 0; overflow: hidden; display: flex; gap: 1px; }
.lower { flex: 1; min-height: 0; display: flex; }
.lowl { flex: 1; min-width: 0; display: flex; flex-direction: column; padding: 7px 0 2px; }
.tabs2 { height: 23px; display: flex; align-items: center; padding-left: 2px; }
.press { border: 1px solid #666; border-width: 2px 1px 1px 2px; border-bottom-color: #fff; border-right-color: #fff; background: repeating-conic-gradient(#f0f0f0 0 25%, #fff 0 50%) 0 0/2px 2px; height: 20px; }
.tabs2 .press { width: 72px; }
.bar { width: 1px; height: 19px; background: #999; margin: 0 10px 0 5px; }
.bot { flex: 1; }
.bot .hs, .tree1 .hs { margin-top: auto; }

/* grids */
.grid { table-layout: fixed; border-collapse: separate; border-spacing: 0; }
.t1, .t2 { width: 100%; }
.t3 { width: 553px; flex: none; }
.grid th, .grid td { border: solid #c0c0c0; border-width: 0 1px 1px 0; padding: 0 2px; height: 19px; line-height: 14px; white-space: nowrap; overflow: hidden; font-weight: normal; text-align: left; }
.grid th { height: 21px; background: #f0f0f0; text-align: center; }
.grid.t1 th { height: 20px; }
.grid.t2 th { height: 22px; }
.grid.t1 td { height: 20px; }
.grid .gold { background: linear-gradient(#fbd9a0, #f2c161); }
.grid th.l { text-align: left; padding-left: 6px; }
.grid th.lock { padding-left: 1px; }
.grid .n { background: #f0f0f0; text-align: center; padding: 0; }
.grid .hot { background: #ffd38c; }
.grid .hit { background: #d9e9f7; }
.grid .r { text-align: right; }
.grid .c { text-align: center; }
.t3 .two td { height: 29px; line-height: 14px; }
.grid .br { padding: 0 0 0 8px; }
.br b { display: inline-block; vertical-align: middle; width: 28px; height: 20px; margin: -3px 5px -3px 0; border-left: 1px solid #c0c0c0; background: linear-gradient(#c0c0c0, #c0c0c0) 9px 0/1px 20px no-repeat, linear-gradient(#c0c0c0, #c0c0c0) 9px 9px/17px 1px no-repeat; }
.grid .k { padding-left: 20px; position: relative; }
.t2 td input { appearance: none; display: block; width: 13px; height: 13px; border: 1px solid #333; margin-left: 19px; background: #fff; }
.plus { position: absolute; left: 2px; top: 3px; width: 13px; height: 13px; border: 1px solid #aaa; background: linear-gradient(#000, #000) center/7px 1px no-repeat, linear-gradient(#000, #000) center/1px 7px no-repeat, #fff; }
.c34 { width: 34px; } .c125 { width: 125px; } .c119 { width: 120px; } .c21 { width: 21px; } .c109 { width: 109px; } .c38 { width: 38px; } .c28 { width: 28px; }
.c22 { width: 22px; } .c62 { width: 62px; } .c268 { width: 268px; } .c55 { width: 55px; } .c65 { width: 65px; } .c81 { width: 81px; }

/* scroll bars */
.hs, .vs { display: flex; background: #f0f0f0; flex: none; align-items: center; }
.hs { height: 16px; padding: 0 4px 0 3px; }
.hs.wide { padding-right: 20px; }
.vs { width: 16px; flex-direction: column; padding: 4px 0 5px; }
.hs svg, .vs svg { width: 10px; height: 10px; }
.th { background: #cdcdcd; }
.hs .th { height: 16px; margin-left: 4px; }
.vs .th { width: 16px; }
.end { margin-left: auto; }
.vs .end { margin: auto 0 0; }
.w84 { width: 84px; } .w17 { width: 17px; } .w105 { width: 105px; }
.th.a { height: 17px; margin-top: 51px; } .th.b { height: 131px; margin-top: 85px; } .th.c { height: 17px; margin-top: 3px; }

/* right actions */
.acts { width: 128px; padding: 35px 6px 0 7px; }
.pair { display: grid; grid-template-columns: 48px 48px; gap: 6px; padding-left: 4px; }
.btn { height: 23px; border: 1px solid #adadad; background: #e1e1e1; }
.full { grid-column: 1 / 3; }
fieldset { margin: 4px 0 0; border: 1px solid #dcdcdc; padding: 7px 0 9px; display: grid; grid-template-columns: 67px 1fr; row-gap: 2px; min-width: 0; }
legend { padding: 0 1px; margin-left: 5px; }
label { display: flex; align-items: center; }
fieldset label { gap: 2px; height: 21px; }
input[type="radio"] { appearance: none; width: 14px; height: 14px; border: 1px solid #444; border-radius: 50%; background: #fff; flex: none; }
input[type="radio"]:checked { background: radial-gradient(circle, #222 4px, #fff 4px); }

/* status and taskbar */
.status { display: grid; grid-template-columns: 359px 360px 217px 237px 1fr; gap: 1px; height: 21px; padding-bottom: 1px; }
.status span { border: 1px solid #d4d4d4; padding: 2px 1px; white-space: nowrap; overflow: hidden; background: linear-gradient(#fff, #f0f0f0); }
.taskbar { display: flex; height: 40px; background: #000b10; color: #fff; align-items: center; }
.start { width: 48px; height: 40px; background: #000; display: flex; align-items: center; justify-content: center; }
.search { width: 344px; height: 40px; background: #333; display: flex; align-items: center; padding: 0 14px 0 9px; gap: 5px; }
.search input { flex: 1; min-width: 0; background: none; border: 0; outline: 0; padding: 0; font-size: 14px; line-height: 20px; }
.search input::placeholder { color: #999; opacity: 1; }
.apps { display: flex; gap: 10px; padding-left: 6px; }
.apps button { width: 40px; height: 40px; display: flex; align-items: center; justify-content: center; border-bottom: 3px solid transparent; border-top: 3px solid transparent; }
.apps .run { border-bottom-color: #76b9ed; }
.cpu { margin-left: auto; text-align: center; line-height: 17px; width: 64px; }
.tray { display: flex; gap: 7px; padding: 0 28px 0 10px; }
.clock { text-align: center; line-height: 18px; width: 100px; }
.note { position: relative; width: 36px; }
.note span { position: absolute; left: 9px; top: 9px; font: bold 11px/14px "Open Sans", sans-serif; }

/* query dialog */
.dialog { position: absolute; left: 359px; top: 84px; width: 852px; height: 513px; display: flex; flex-direction: column; background: #f0f0f0; border: 1px solid #aaa; box-shadow: 2px 3px 10px rgba(0, 0, 0, .4); }
.dialog header { display: flex; align-items: center; height: 29px; background: #fff; padding: 0 17px 0 7px; color: #888; gap: 34px; font-family: "Noto Sans CJK SC", sans-serif; }
.dialog h2 { margin-left: -29px; flex: 1; }
.dtabs { display: flex; height: 27px; overflow: hidden; }
.dtabs > button { height: 21px; margin-top: 1px; padding: 0 11px; border-right: 1px solid #999; }
.dtabs > button:first-child { padding-left: 6px; }
.dtabs > .w { padding-right: 16px; }
.dtabs > .p { padding: 0 4px; }
.dtabs .press { display: block; width: 43px; line-height: 16px; }
.dact { display: flex; gap: 4px; margin: 3px -3px 0 auto; }
.dact .btn { width: 73px; }
.dact u { text-decoration: none; font-family: "Open Sans", sans-serif; }
.dbody { flex: 1; min-height: 0; display: flex; }
.dleft { width: 219px; display: flex; flex-direction: column; padding: 0 3px 2px 0; }
.dleft select { height: 20px; border: 1px solid #adadad; border-radius: 0; width: 216px; appearance: none; padding: 0 18px 0 1px; background: url("data:image/svg+xml,%3Csvg xmlns='http://www.w3.org/2000/svg' width='10' height='10'%3E%3Cpath d='M1 3l4 4 4-4' fill='none' stroke='%23555'/%3E%3C/svg%3E") right 3px center no-repeat, #e1e1e1; }
.qt { display: flex; align-items: flex-end; height: 22px; padding-left: 1px; }
.qt button { height: 18px; width: 56px; border: 1px solid #dcdcdc; border-bottom: 0; background: #f0f0f0; }
.qt .cur { height: 20px; width: 61px; background: #fff; }
.page { flex: 1; min-height: 0; border: 1px solid #e2e2e2; border-width: 1px 1px 0 0; padding: 3px 0 0 3px; display: flex; flex-direction: column; background: linear-gradient(90deg, #fff 3px, #f0f0f0 3px); }
.tbox { border: 1px solid #828790; background: #fff; height: 368px; width: 209px; padding: 1px 2px; display: flex; flex-direction: column; }
.tv { flex: 1; min-height: 0; display: flex; overflow: hidden; }
.tree2 { flex: 1; min-width: 0; overflow: hidden; line-height: 16px; white-space: nowrap; padding-left: 1px; }
.tree2 ul ul { margin-left: 10px; padding-left: 8px; border-left: 1px dotted #777; }
.tree2 p { height: 16px; padding-left: 21px; background: 4px 3px/10px 10px no-repeat; }
.tree2 .o { background-image: url("data:image/svg+xml,%3Csvg xmlns='http://www.w3.org/2000/svg' width='10' height='10'%3E%3Cpath d='M1 3l4 4 4-4' fill='none' stroke='%23444' stroke-width='2'/%3E%3C/svg%3E"); }
.tree2 .s { background-image: url("data:image/svg+xml,%3Csvg xmlns='http://www.w3.org/2000/svg' width='10' height='10'%3E%3Cpath d='M3 1l4 4-4 4' fill='none' stroke='%23999' stroke-width='1.800'/%3E%3C/svg%3E"); }
.leaf { height: 16px; padding-left: 21px; position: relative; }
.leaf::before { content: ""; position: absolute; left: 10px; top: 0; width: 9px; height: 9px; border-left: 1px dotted #777; border-bottom: 1px dotted #777; }
.leaf:not(.end)::after { content: ""; position: absolute; left: 10px; top: 8px; height: 8px; border-left: 1px dotted #777; }
.pick { display: inline-block; background: #d9d9d9; padding: 0 5px 0 2px; margin-left: -2px; }
.tbox .hs { padding: 0 19px 0 2px; }
.radios { display: flex; gap: 20px; padding: 10px 0 0 11px; }
.radios label { gap: 9px; white-space: nowrap; height: 15px; }
.radios input[type="radio"] { width: 11px; height: 11px; border-color: #999; }
.radios input[type="radio"]:checked { border-color: #444; background: radial-gradient(circle, #000 2px, #fff 3px); }
.dright { flex: 1; min-width: 0; border: 1px solid #a9a9b0; background: #fff; display: flex; justify-content: space-between; padding: 1px 2px 1px 1px; overflow: hidden; }
.marks { position: absolute; left: 0; top: 0; pointer-events: none; }
```
